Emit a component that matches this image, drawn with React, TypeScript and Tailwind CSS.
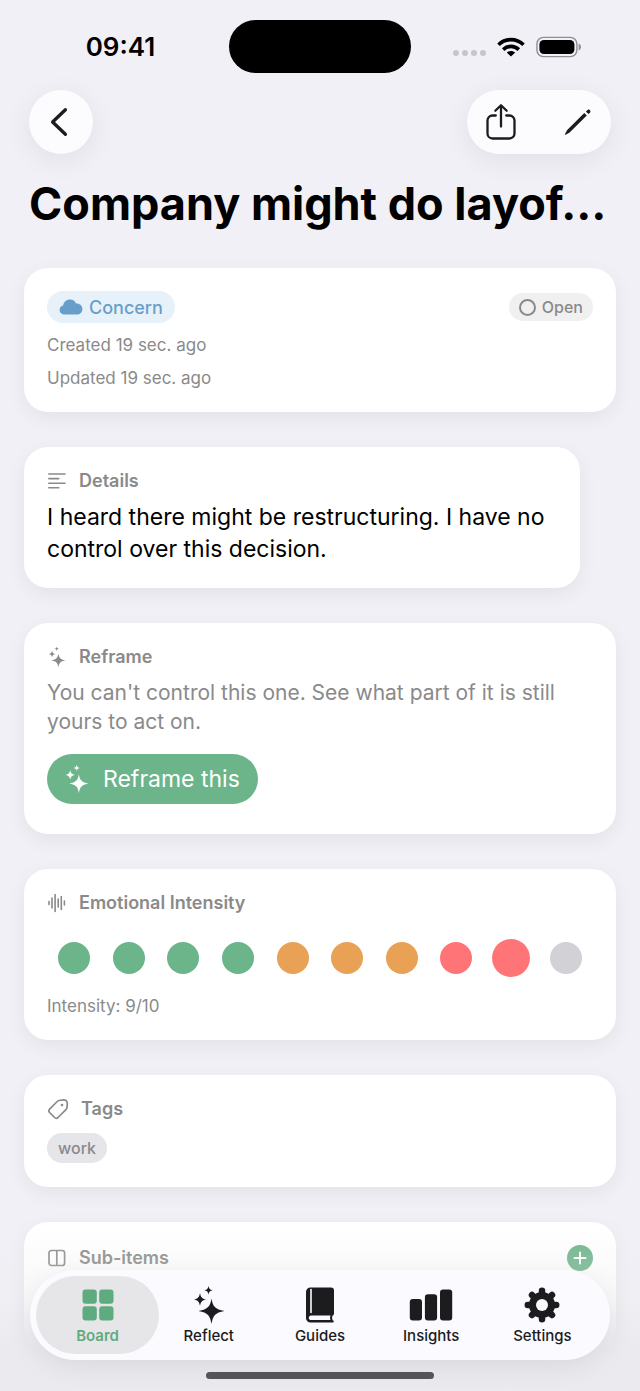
import type { ReactNode } from "react";

type IconProps = {
  className?: string;
};

type Level = {
  value: number;
  color: string;
};

const SELECTED_LEVEL = 9;

const levels: Level[] = [
  { value: 1, color: "bg-[#6cb48a]" },
  { value: 2, color: "bg-[#6cb48a]" },
  { value: 3, color: "bg-[#6cb48a]" },
  { value: 4, color: "bg-[#6cb48a]" },
  { value: 5, color: "bg-[#e8a155]" },
  { value: 6, color: "bg-[#e8a155]" },
  { value: 7, color: "bg-[#e8a155]" },
  { value: 8, color: "bg-[#ff7577]" },
  { value: 9, color: "bg-[#ff7577]" },
  { value: 10, color: "bg-[#d1d1d6]" },
];

function SparklesIcon({ className }: IconProps) {
  return (
    <svg viewBox="0 0 32 40" fill="currentColor" className={className} aria-hidden="true">
      <path d="M18.5 13.5C19.8 21.2 22 24.3 31.5 26C22 27.7 19.8 30.8 18.5 39C17.2 30.8 15 27.7 5.5 26C15 24.3 17.2 21.2 18.5 13.5Z" />
      <path d="M7 8C7.8 12.2 9 13.6 13.2 14.5C9 15.4 7.8 16.8 7 21C6.2 16.8 5 15.4 0.8 14.5C5 13.6 6.2 12.2 7 8Z" />
      <path d="M15.5 1C16.1 3.7 16.8 4.6 19.7 5.2C16.8 5.8 16.1 6.7 15.5 9.4C14.9 6.7 14.2 5.8 11.3 5.2C14.2 4.6 14.9 3.7 15.5 1Z" />
    </svg>
  );
}

function WifiIcon() {
  return (
    <svg viewBox="0 0 28 20" className="h-5 w-7" aria-hidden="true">
      <g fill="none" stroke="black" strokeWidth="3.6">
        <path d="M1.5 7.8C8.5 0.9 19.5 0.9 26.5 7.8" />
        <path d="M6.2 12.6C10.6 8.3 17.4 8.3 21.8 12.6" />
      </g>
      <path d="M14 19.6L9.8 15.6C12.1 13.5 15.9 13.5 18.2 15.6Z" />
    </svg>
  );
}

function BatteryIcon() {
  return (
    <svg viewBox="0 0 46 22" className="h-[22px] w-[46px]" aria-hidden="true">
      <rect x="0.9" y="1.4" width="40" height="19.2" rx="6.5" fill="none" stroke="#8e8e93" strokeWidth="1.4" />
      <rect x="3.4" y="3.9" width="35" height="14.2" rx="4.5" />
      <path d="M42.6 7.5C45.8 8.6 45.8 13.4 42.6 14.5Z" fill="#8e8e93" />
    </svg>
  );
}

function ShareIcon() {
  return (
    <svg viewBox="0 0 30 38" fill="none" stroke="currentColor" strokeWidth="2.3" strokeLinecap="round" strokeLinejoin="round" className="h-[38px] w-[30px]" aria-hidden="true">
      <path d="M9.8 12.5H6.5A5 5 0 0 0 1.5 17.5V30.5A5 5 0 0 0 6.5 35.5H23.5A5 5 0 0 0 28.5 30.5V17.5A5 5 0 0 0 23.5 12.5H20.2" />
      <path d="M15 23.5V2.5M9.3 7.8L15 2.2L20.7 7.8" />
    </svg>
  );
}

function PencilIcon() {
  return (
    <svg viewBox="0 0 28 28" fill="currentColor" className="size-7" aria-hidden="true">
      <path d="M20.3 5.1L22.8 7.6L5.6 24.5L1.7 26.7C1.1 27 0.7 26.5 1 25.9L3.2 22.1Z" />
      <path d="M21.9 3.6L23.6 1.9C25.2 0.7 27.3 2.8 26.1 4.4L24.4 6.1Z" />
    </svg>
  );
}

function LinesIcon() {
  return (
    <svg viewBox="0 0 20 18" fill="none" stroke="currentColor" strokeWidth="1.6" strokeLinecap="round" className="h-[18px] w-5" aria-hidden="true">
      <path d="M1.8 2H18M1.8 6.6H11.8M1.8 11.2H18M1.8 15.8H11.8" />
    </svg>
  );
}

function WaveformIcon() {
  return (
    <svg viewBox="0 0 20 20" fill="none" stroke="currentColor" strokeWidth="1.6" strokeLinecap="round" className="size-5" aria-hidden="true">
      <path d="M2 8.6V11.4M5 5V15M8.1 1.5V18.5M11.2 6V14M14.3 3.5V16.5M17.4 8V12" />
    </svg>
  );
}

function TagIcon() {
  return (
    <svg viewBox="0 0 22 22" fill="none" stroke="currentColor" strokeWidth="1.7" strokeLinejoin="round" className="size-[22px]" aria-hidden="true">
      <path d="M12 2.5L16.5 1.9C18.8 1.7 20.4 3.2 20.3 5.6L20 9.4C19.9 10.3 19.5 11 18.9 11.6L11 19.5C9.9 20.5 8.6 20.5 7.6 19.5L2.6 14.5C1.6 13.4 1.6 12.2 2.6 11.1L10.2 3.5C10.7 2.9 11.3 2.6 12 2.5Z" />
      <circle cx="15" cy="7" r="1.3" fill="currentColor" stroke="none" />
    </svg>
  );
}

function ColumnsIcon() {
  return (
    <svg viewBox="0 0 20 18" fill="none" stroke="currentColor" strokeWidth="1.7" className="h-[18px] w-5" aria-hidden="true">
      <rect x="2" y="1.5" width="15.6" height="15" rx="2.5" />
      <path d="M9.8 1.5V16.5" />
    </svg>
  );
}

function GridIcon() {
  return (
    <svg viewBox="0 0 32 32" fill="currentColor" className="size-8" aria-hidden="true">
      <rect x="0.5" y="0.5" width="14.3" height="14.3" rx="3" />
      <rect x="17.2" y="0.5" width="14.3" height="14.3" rx="3" />
      <rect x="0.5" y="17.2" width="14.3" height="14.3" rx="3" />
      <rect x="17.2" y="17.2" width="14.3" height="14.3" rx="3" />
    </svg>
  );
}

function BookIcon() {
  return (
    <svg viewBox="0 0 30 36" className="h-9 w-[30px]" aria-hidden="true">
      <path fill="currentColor" fillRule="evenodd" d="M5.5 0.5H26A3 3 0 0 1 29 3.5V26.5C29 27.5 28.5 28.2 27.7 28.6C26.9 30 26.9 31.8 27.7 33.2C29.3 33.7 29.2 35.5 27.5 35.5H5.5A4.5 4.5 0 0 1 1 31V5A4.5 4.5 0 0 1 5.5 0.5ZM6 28.5C3.1 28.6 3.1 33 6 33.1H25.5C24.9 31.6 24.9 30 25.5 28.5Z" />
      <path d="M6 2.5V25.5" stroke="#fafaff" strokeWidth="1.6" strokeLinecap="round" />
    </svg>
  );
}

function BarsIcon() {
  return (
    <svg viewBox="0 0 44 32" fill="currentColor" className="h-8 w-11" aria-hidden="true">
      <rect x="0.8" y="10" width="12.2" height="21.5" rx="3" />
      <rect x="15.9" y="5.3" width="12.2" height="26.2" rx="3" />
      <rect x="31" y="0.5" width="12.2" height="31" rx="3" />
    </svg>
  );
}

function GearIcon() {
  return (
    <svg viewBox="0 0 36 36" className="size-9" aria-hidden="true">
      <g stroke="currentColor" strokeWidth="6.5" strokeLinecap="round">
        <path d="M18 3.8V32.2M3.8 18H32.2M8 8L28 28M28 8L8 28" />
      </g>
      <circle cx="18" cy="18" r="13" fill="currentColor" />
      <circle cx="18" cy="18" r="6" fill="#fafaff" />
    </svg>
  );
}

const tabs = [
  { name: "Board", icon: <GridIcon />, active: true },
  { name: "Reflect", icon: <SparklesIcon className="h-10 w-8" />, active: false },
  { name: "Guides", icon: <BookIcon />, active: false },
  { name: "Insights", icon: <BarsIcon />, active: false },
  { name: "Settings", icon: <GearIcon />, active: false },
];

function Card({ children, className = "" }: { children: ReactNode; className?: string }) {
  return (
    <section
      className={`rounded-[24px] bg-white p-[23px] shadow-[0_6px_20px_rgba(0,0,0,0.06)] ${className}`}
    >
      {children}
    </section>
  );
}

function CardTitle({ icon, children }: { icon: ReactNode; children: ReactNode }) {
  return (
    <h2 className="flex items-center gap-3 text-[18px] leading-[22px] font-semibold text-[#8a8a8a]">
      {icon}
      {children}
    </h2>
  );
}

export default function App() {
  return (
    <div className="relative flex h-screen flex-col overflow-hidden bg-[#f1f0f6] font-['Inter',sans-serif] text-black">
      <header className="shrink-0">
        <div className="grid grid-cols-[1fr_auto_1fr] items-center pt-5">
          <time className="pl-3 text-center text-[26px] leading-8 font-semibold">09:41</time>
          <div className="h-[53px] w-[182px] rounded-full bg-black" />
          <div className="flex items-center justify-center gap-[11px] pr-4">
            <div className="flex gap-[3px] pt-3">
              <span className="size-[6px] rounded-full bg-[#c5c5ca]" />
              <span className="size-[6px] rounded-full bg-[#c5c5ca]" />
              <span className="size-[6px] rounded-full bg-[#c5c5ca]" />
              <span className="size-[6px] rounded-full bg-[#c5c5ca]" />
            </div>
            <WifiIcon />
            <BatteryIcon />
          </div>
        </div>

        <div className="flex items-center justify-between px-[29px] pt-[17px]">
          <button
            type="button"
            aria-label="Back"
            className="flex size-16 items-center justify-center rounded-full bg-[#fcfcff] pr-1 text-[#1c1c1e] shadow-[0_6px_28px_rgba(0,0,0,0.07)]"
          >
            <svg viewBox="0 0 18 30" fill="none" stroke="currentColor" strokeWidth="3.3" strokeLinecap="round" strokeLinejoin="round" className="h-[30px] w-[18px]" aria-hidden="true">
              <path d="M15.4 2.7L2.6 15L15.4 27.3" />
            </svg>
          </button>
          <div className="flex h-16 items-center gap-12 rounded-full bg-[#fcfcff] px-[19px] text-[#1c1c1e] shadow-[0_6px_28px_rgba(0,0,0,0.07)]">
            <button type="button" aria-label="Share">
              <ShareIcon />
            </button>
            <button type="button" aria-label="Edit">
              <PencilIcon />
            </button>
          </div>
        </div>

        <h1 className="px-[29px] pt-5 text-[45px] leading-[60px] font-bold whitespace-nowrap">
          Company might do layof…
        </h1>
      </header>

      <main className="flex flex-1 flex-col gap-[35px] px-6 pt-[34px]">
        <Card>
          <div className="flex items-center justify-between">
            <span className="flex h-8 items-center gap-[6px] rounded-full bg-[#e7f1f9] px-3 text-[18px] font-medium text-[#679fca]">
              <svg viewBox="0 0 24 16" fill="currentColor" className="h-4 w-6" aria-hidden="true">
                <path d="M6 15.5C2.9 15.5 0.6 13.6 0.6 10.9C0.6 8.6 2 7 4.2 6.5C4.6 3 7.4 0.5 11 0.5C13.8 0.5 16 2 17.1 4.4C20.8 4.2 23.4 6.6 23.4 9.9C23.4 13.2 21 15.5 17.8 15.5Z" />
              </svg>
              Concern
            </span>
            <span className="flex h-7 items-center gap-[6px] rounded-full bg-[#f0f0f0] px-[10px] text-[16px] font-medium text-[#8a8a8a]">
              <span className="size-[17px] rounded-full border-2 border-[#8a8a8a]" />
              Open
            </span>
          </div>
          <div className="mt-[11px] flex flex-col gap-[11px] text-[17px] leading-[22px] text-[#8a8a8a]">
            <p>Created 19 sec. ago</p>
            <p>Updated 19 sec. ago</p>
          </div>
        </Card>

        <Card className="mr-9">
          <CardTitle icon={<LinesIcon />}>Details</CardTitle>
          <p className="mt-[9px] text-[23px] leading-8">
            I heard there might be restructuring. I have no control over this decision.
          </p>
        </Card>

        <Card>
          <CardTitle icon={<SparklesIcon className="h-[22px] w-5" />}>Reframe</CardTitle>
          <p className="mt-[10px] text-[21px] leading-[29px] text-[#8a8a8a]">
            You can't control this one. See what part of it is still yours to act on.
          </p>
          <button
            type="button"
            className="mt-[18px] mb-[7px] flex h-[50px] items-center gap-[14px] rounded-full bg-[#6cb48a] px-[18px] text-[23px] text-white"
          >
            <SparklesIcon className="h-[30px] w-6" />
            Reframe this
          </button>
        </Card>

        <Card>
          <CardTitle icon={<WaveformIcon />}>Emotional Intensity</CardTitle>
          <div className="mt-5 mb-[13px] grid h-12 grid-cols-10 place-items-center">
            {levels.map((level) => (
              <button
                key={level.value}
                type="button"
                aria-label={`Intensity ${level.value}`}
                className={`rounded-full ${level.color} ${level.value === SELECTED_LEVEL ? "size-[38px]" : "size-8"}`}
              />
            ))}
          </div>
          <p className="text-[17px] leading-[22px] text-[#8a8a8a]">
            Intensity: {SELECTED_LEVEL}/10
          </p>
        </Card>

        <Card>
          <CardTitle icon={<TagIcon />}>Tags</CardTitle>
          <div className="mt-[13px] mb-px flex">
            <span className="flex h-[30px] items-center rounded-full bg-[#e5e5ea] px-[11px] text-[16px] font-medium text-[#8a8a8a]">
              work
            </span>
          </div>
        </Card>

        <Card className="h-32 shrink-0">
          <div className="flex items-center justify-between">
            <CardTitle icon={<ColumnsIcon />}>Sub-items</CardTitle>
            <button
              type="button"
              aria-label="Add sub-item"
              className="flex size-[26px] items-center justify-center rounded-full bg-[#6cb48a] text-white"
            >
              <svg viewBox="0 0 14 14" fill="none" stroke="currentColor" strokeWidth="2" strokeLinecap="round" className="size-[14px]" aria-hidden="true">
                <path d="M7 1.5V12.5M1.5 7H12.5" />
              </svg>
            </button>
          </div>
        </Card>
      </main>

      {/* Tab bar floats over the scrolled content */}
      <div className="absolute inset-x-0 bottom-0 bg-linear-to-b from-[#eeeef200] via-[#ededf166] via-45% to-[#ebebef] to-75% px-[30px] pt-11">
        <nav className="flex h-[90px] items-center rounded-full bg-[#fafafff5] px-3 shadow-[0_6px_28px_rgba(0,0,0,0.08)]">
          {tabs.map((tab) => (
            <div key={tab.name} className="flex-1">
              <a
                href="#"
                aria-current={tab.active ? "page" : undefined}
                className={`-mx-[6px] flex h-[78px] flex-col items-center rounded-full pt-2 text-[15px] leading-5 ${
                  tab.active
                    ? "bg-[#e6e6e9] font-semibold text-[#5fab80]"
                    : "font-medium text-[#1c1c1e]"
                }`}
              >
                <span className="flex h-[42px] items-center">{tab.icon}</span>
                {tab.name}
              </a>
            </div>
          ))}
        </nav>
        <div className="flex justify-center pt-3 pb-3">
          <div className="h-[7px] w-[228px] rounded-full bg-[#555557]" />
        </div>
      </div>
    </div>
  );
}
